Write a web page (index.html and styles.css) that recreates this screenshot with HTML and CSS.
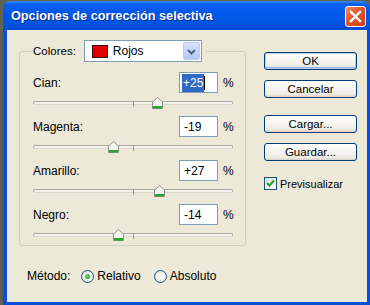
FILE: index.html
```html
<!DOCTYPE html>
<html lang="es">
<head>
    <meta charset="UTF-8">
    <title>Opciones de corrección selectiva</title>
    <link rel="stylesheet" href="styles.css">
</head>

<body>
    <div class="window">
        <div class="titlebar">
            <span class="title">Opciones de corrección selectiva</span>
            <span class="close">
                <svg width="13" height="13" viewBox="0 0 13 13">
                    <path d="M2 2 L11 11 M11 2 L2 11" stroke="#fff" stroke-width="2.4" stroke-linecap="square"/>
                </svg>
            </span>
        </div>

        <div class="frame">
            <div class="main">
                <fieldset class="group">
                    <legend class="colores">
                        <span>Colores:</span>
                        <span class="combo">
                            <span class="swatch"></span>
                            <span class="combo-text">Rojos</span>
                            <span class="combo-btn">
                                <svg width="15" height="18" viewBox="0 0 15 18">
                                    <path d="M4 7 L7.5 10.5 L11 7" fill="none" stroke="#4d6185" stroke-width="2"/>
                                </svg>
                            </span>
                        </span>
                    </legend>

                    <div class="row">
                        <span class="label">Cian:</span>
                        <span class="input"><span class="selected">+25</span><span class="caret"></span></span>
                        <span class="pct">%</span>
                    </div>
                    <div class="slider">
                        <div class="track"></div>
                        <div class="tick"></div>
                        <svg class="thumb" style="left: 119px" width="11" height="12" viewBox="0 0 11 12">
                            <path d="M0.5 5 L5.5 0.5 L10.5 5 V11.5 H0.5 Z" fill="#f5f5f1" stroke="#8d8f8f"/>
                            <rect x="1" y="9" width="9" height="2.5" fill="#2da52d"/>
                        </svg>
                    </div>

                    <div class="row">
                        <span class="label">Magenta:</span>
                        <span class="input">-19</span>
                        <span class="pct">%</span>
                    </div>
                    <div class="slider">
                        <div class="track"></div>
                        <div class="tick"></div>
                        <svg class="thumb" style="left: 75px" width="11" height="12" viewBox="0 0 11 12">
                            <path d="M0.5 5 L5.5 0.5 L10.5 5 V11.5 H0.5 Z" fill="#f5f5f1" stroke="#8d8f8f"/>
                            <rect x="1" y="9" width="9" height="2.5" fill="#2da52d"/>
                        </svg>
                    </div>

                    <div class="row">
                        <span class="label">Amarillo:</span>
                        <span class="input">+27</span>
                        <span class="pct">%</span>
                    </div>
                    <div class="slider">
                        <div class="track"></div>
                        <div class="tick"></div>
                        <svg class="thumb" style="left: 121px" width="11" height="12" viewBox="0 0 11 12">
                            <path d="M0.5 5 L5.5 0.5 L10.5 5 V11.5 H0.5 Z" fill="#f5f5f1" stroke="#8d8f8f"/>
                            <rect x="1" y="9" width="9" height="2.5" fill="#2da52d"/>
                        </svg>
                    </div>

                    <div class="row">
                        <span class="label">Negro:</span>
                        <span class="input">-14</span>
                        <span class="pct">%</span>
                    </div>
                    <div class="slider">
                        <div class="track"></div>
                        <div class="tick"></div>
                        <svg class="thumb" style="left: 80px" width="11" height="12" viewBox="0 0 11 12">
                            <path d="M0.5 5 L5.5 0.5 L10.5 5 V11.5 H0.5 Z" fill="#f5f5f1" stroke="#8d8f8f"/>
                            <rect x="1" y="9" width="9" height="2.5" fill="#2da52d"/>
                        </svg>
                    </div>
                </fieldset>

                <div class="metodo">
                    <span>Método:</span>
                    <span class="radio on"></span>
                    <span class="radio-label">Relativo</span>
                    <span class="radio"></span>
                    <span class="radio-label">Absoluto</span>
                </div>
            </div>

            <div class="buttons">
                <span class="btn default">OK</span>
                <span class="btn">Cancelar</span>
                <span class="btn gap">Cargar...</span>
                <span class="btn">Guardar...</span>
                <div class="check-row">
                    <span class="check">
                        <svg width="11" height="11" viewBox="0 0 11 11">
                            <path d="M2 5 L4.5 7.5 L9 2.5" fill="none" stroke="#21a121" stroke-width="2"/>
                        </svg>
                    </span>
                    <span>Previsualizar</span>
                </div>
            </div>
        </div>
    </div>
</body>
</html>
```

FILE: styles.css
```css
* {
    box-sizing: border-box;
}

body {
    margin: 0;
    background: #5e6250;
    font-family: "Liberation Sans", Arial, sans-serif;
    font-size: 12px;
    color: #000;
    overflow: hidden;
}

.window {
    margin: 1px 0 0 3px;
    width: 367px;
    height: 304px;
    display: flex;
    flex-direction: column;
}

.titlebar {
    height: 29px;
    display: flex;
    align-items: center;
    padding-left: 8px;
    border-radius: 7px 7px 0 0;
    background: linear-gradient(#3d8cf7 0, #0a5ff0 3px, #0058ea 40%, #0054e3 80%, #0049d2 100%);
}

.title {
    color: #fff;
    font-weight: bold;
    font-size: 12.7px;
    text-shadow: 1px 1px 0 #0a2a8c;
}

.close {
    margin-left: auto;
    margin-right: 4px;
    margin-top: 1px;
    width: 21px;
    height: 21px;
    border: 1px solid #fff;
    border-radius: 3px;
    background: linear-gradient(135deg, #ee8a62 0, #e2552c 45%, #cc3e18 100%);
    display: flex;
    align-items: center;
    justify-content: center;
}

.close svg {
    display: block;
}

.frame {
    flex: 1;
    display: flex;
    background: #ece9d8;
    border-left: 4px solid #0a4fdc;
    border-right: 3px solid #0a4fdc;
    border-bottom: 3px solid #0a4fdc;
    padding: 10px 0 0 12px;
}

.main {
    width: 227px;
}

.group {
    margin: 0;
    padding: 0 12px 2px 13px;
    border: 1px solid #d0d0bf;
    border-radius: 3px;
}

.colores {
    display: flex;
    align-items: center;
    padding: 0 4px 0 0;
    height: 22px;
    font-size: 11.5px;
}

.combo {
    margin-left: 8px;
    width: 118px;
    height: 22px;
    border: 1px solid #7f9db9;
    background: #fff;
    display: flex;
    align-items: center;
    padding-left: 7px;
}

.swatch {
    width: 16px;
    height: 13px;
    background: #e00000;
    border: 1px solid #3a1010;
}

.combo-text {
    margin-left: 5px;
    font-size: 12px;
}

.combo-btn {
    margin-left: auto;
    margin-right: 1px;
    width: 17px;
    height: 18px;
    border: 1px solid #bacdf5;
    border-radius: 2px;
    background: linear-gradient(#d6e2fd, #b4c8f6);
}

.combo-btn svg {
    display: block;
}

.row {
    display: flex;
    align-items: center;
    height: 21px;
}

.row:first-of-type {
    margin-top: 10px;
}

.label {
    flex: 1;
}

.input {
    width: 39px;
    height: 21px;
    border: 1px solid #7f9db9;
    background: #fff;
    display: flex;
    align-items: center;
    padding-left: 4px;
}

.selected {
    background: #316ac5;
    color: #fff;
    padding: 2px 1px;
    margin-left: -2px;
}

.caret {
    width: 1px;
    height: 14px;
    background: #000;
}

.pct {
    margin-left: 5px;
    width: 10px;
}

.slider {
    position: relative;
    height: 18px;
    margin-bottom: 5px;
}

.slider:last-child {
    margin-bottom: 0;
}

.track {
    position: absolute;
    left: 0;
    right: 0;
    top: 8px;
    height: 4px;
    border: 1px solid #a9a89f;
    border-bottom-color: #d8d6ca;
    border-radius: 2px;
    background: #f4f3ee;
}

.tick {
    position: absolute;
    left: 100px;
    top: 8px;
    width: 1px;
    height: 6px;
    background: #9c9b94;
}

.thumb {
    position: absolute;
    top: 4px;
}

.metodo {
    display: flex;
    align-items: center;
    height: 14px;
    margin-top: 23px;
    margin-left: 8px;
}

.radio {
    width: 13px;
    height: 13px;
    border: 1px solid #1c5180;
    border-radius: 50%;
    background: radial-gradient(circle at 65% 65%, #fff 0, #f2f2ee 40%, #d8d8d2 100%);
    margin-left: 11px;
    display: flex;
    align-items: center;
    justify-content: center;
}

.metodo .radio:nth-child(4) {
    margin-left: 13px;
}

.radio.on::after {
    content: "";
    width: 5px;
    height: 5px;
    border-radius: 50%;
    background: radial-gradient(circle at 40% 40%, #7ee07e 0, #21a121 70%);
}

.radio-label {
    margin-left: 3px;
}

.buttons {
    margin-left: 18px;
    margin-top: 12px;
    width: 93px;
    display: flex;
    flex-direction: column;
}

.btn {
    height: 18px;
    border: 1px solid #003c74;
    border-radius: 3px;
    background: linear-gradient(#fff 0, #f6f5f1 50%, #eceae2 85%, #d6d0c5 100%);
    display: flex;
    align-items: center;
    justify-content: center;
    font-size: 11.5px;
    margin-top: 10px;
}

.btn.default {
    margin-top: 0;
    box-shadow: inset 0 0 0 1px #b9cdf6, inset 0 -1px 0 1px #90b0ec;
}

.btn.gap {
    margin-top: 17px;
}

.check-row {
    display: flex;
    align-items: center;
    margin-top: 16px;
    height: 13px;
    font-size: 11px;
}

.check {
    width: 13px;
    height: 13px;
    border: 1px solid #1c5180;
    background: linear-gradient(135deg, #dcdcd7, #fff);
    margin-right: 3px;
    display: flex;
    align-items: center;
    justify-content: center;
}

.check svg {
    display: block;
}
```
